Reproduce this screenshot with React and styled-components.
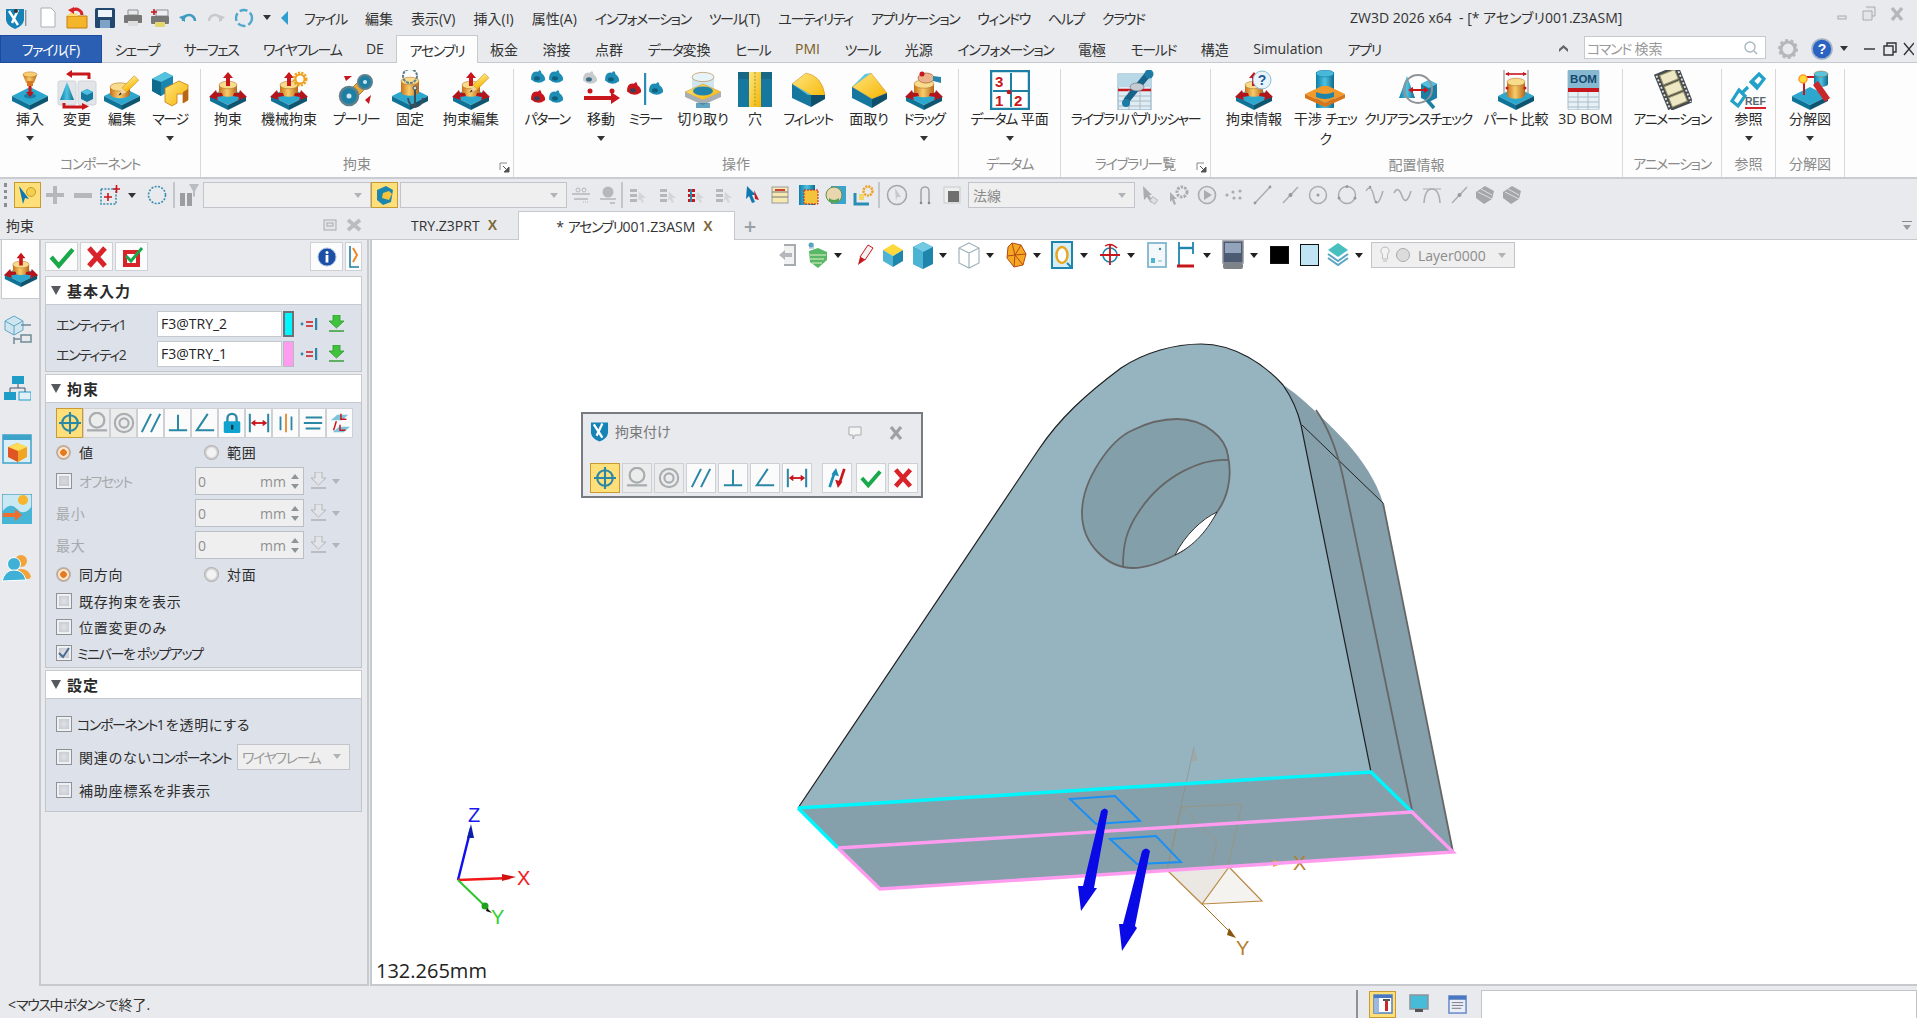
import React from "react";
import styled, { createGlobalStyle } from "styled-components";

const FONT = `"Open Sans","Noto Sans CJK JP",sans-serif`;
const Global = createGlobalStyle`
  html,body{margin:0;padding:0;background:#e8eaed;overflow:hidden;}
  *{box-sizing:border-box;}
  body{font-family:${FONT};font-feature-settings:"palt";color:#2a2a2a;}
`;

/* kana runs are set tighter than kanji, as in the original UI font */
const Kana = styled.span`letter-spacing:-1.4px;`;
const kt = (text) => text.split(/([\u30A0-\u30FF]+)/).map((part, i) => (i % 2 ? <Kana key={i}>{part}</Kana> : part));

/* ---------- icon primitives ---------- */
const I = ({ s = 40, w, h, vb = "0 0 40 40", children }) => (
  <svg width={w || s} height={h || s} viewBox={vb} style={{ display: "block", flex: "none" }}>{children}</svg>
);
const Defs = () => (
  <svg width="0" height="0" style={{ position: "absolute" }}>
    <defs>
      <linearGradient id="gold" x1="0" x2="1"><stop offset="0" stopColor="#c9701c" /><stop offset=".45" stopColor="#f7cd6a" /><stop offset="1" stopColor="#b8651a" /></linearGradient>
      <linearGradient id="teal" x1="0" x2="1"><stop offset="0" stopColor="#0f7ea6" /><stop offset=".5" stopColor="#4fc3e2" /><stop offset="1" stopColor="#0d6a8e" /></linearGradient>
      <linearGradient id="yel" x1="0" y1="0" x2="1" y2="1"><stop offset="0" stopColor="#ffe680" /><stop offset="1" stopColor="#f5b400" /></linearGradient>
    </defs>
  </svg>
);
const Blk = ({ y = 0 }) => (
  <g transform={`translate(0 ${y})`}>
    <path d="M2 26 20 17 38 26 20 35Z" fill="#2ca8cf" />
    <path d="M2 26V31L20 40V35Z" fill="#0f7297" />
    <path d="M38 26V31L20 40V35Z" fill="#0f5570" />
  </g>
);
const Cyl = ({ x = 20, y = 13, rx = 9, h = 9, fill = "url(#gold)", top = "#f8dc8c" }) => (
  <g>
    <path d={`M${x - rx} ${y}V${y + h}A${rx} ${rx * 0.42} 0 0 0 ${x + rx} ${y + h}V${y}Z`} fill={fill} />
    <ellipse cx={x} cy={y} rx={rx} ry={rx * 0.42} fill={top} stroke="#a9661c" strokeWidth=".5" />
  </g>
);
const RedUp = ({ x = 20, y = 3, l = 9 }) => <path d={`M${x} ${y}l5 6h-3v${l}h-4v-${l}h-3z`} fill="#c8161d" />;
const Arms = () => <path d="M1 27 8 20l1 3 5 0 1 3-6 1 1 3zM39 27 32 20l-1 3-5 0-1 3 6 1-1 3z" fill="#b4151b" />;
const Pencil = ({ x = 20, y = 20, s = 1 }) => (
  <g transform={`translate(${x} ${y}) rotate(45) scale(${s})`}>
    <rect x="-2.5" y="-20" width="5.5" height="15" fill="url(#yel)" stroke="#c58a14" strokeWidth=".5" />
    <path d="M-2.5-5h5.5L.2 2z" fill="#f0d2a0" />
    <path d="M-.7-1 1.1-1 .2 2z" fill="#222" />
  </g>
);
const Bolt = ({ x, y, c = "#1e8db5", r = 7 }) => (
  <g>
    <path d={`M${x - r} ${y + r * .5}Q${x - r} ${y - r * .8} ${x} ${y - r * .6}Q${x + r * .4} ${y - r * 1.1} ${x + r * .5} ${y - r * .4}Q${x + r * 1.1} ${y} ${x + r} ${y + r * .6}Q${x} ${y + r * 1.4} ${x - r} ${y + r * .5}Z`} fill={c} />
    <ellipse cx={x - r * .15} cy={y + r * .35} rx={r * .42} ry={r * .3} fill="#0b4f69" opacity=".75" />
  </g>
);
const Constraint = () => (<><Blk /><Cyl y={15} rx={9} h={8} /><RedUp y={2} l={8} /><Arms /></>);

const icons = {
  insert: <><Blk /><ellipse cx="20" cy="26" rx="6" ry="2.6" fill="#1a7ea8" /><rect x="18.5" y="13" width="3" height="10" fill="#c8161d" /><path d="M16 22h8l-4 5z" fill="#b4151b" /><path d="M13 5h14l-3 8h-8z" fill="url(#gold)" /><ellipse cx="20" cy="4.5" rx="7" ry="2.6" fill="#f8cf70" stroke="#b4621a" strokeWidth=".5" /><rect x="17" y="11" width="6" height="5" fill="#d8771f" /></>,
  change: <><rect x="1" y="11" width="18" height="24" rx="2" fill="#e2e5e8" stroke="#cfd3d8" /><rect x="21" y="11" width="18" height="24" rx="2" fill="#e2e5e8" stroke="#cfd3d8" /><path d="M10 12 3 30h14z" fill="url(#teal)" /><path d="M24 22l6-3 6 3v7l-6 3-6-3z" fill="#17789f" /><path d="M24 22l6-3 6 3-6 3z" fill="#4cbfe0" /><path d="M32 3v6M33 4H14" stroke="#c8161d" strokeWidth="3" fill="none" /><path d="M15 0v8l-6-4z" fill="#c8161d" /><path d="M7 33v4h19" stroke="#c8161d" strokeWidth="3" fill="none" /><path d="M25 33v7l7-3.5z" fill="#c8161d" /></>,
  edit: <><Blk /><Cyl x={18} y={17} rx={10} h={7} /><Pencil x={18} y={24} s={1.15} /></>,
  merge: <><path d="M2 9l13-7 8 4v13l-12 7-9-5z" fill="#1b86ad" /><path d="M2 9l13-7 8 4-12 6z" fill="#55c3e0" /><path d="M11 12v14l-9-5V9z" fill="#0f6b8e" /><path d="M15 18l14-7 9 4v15l-5 3v-9h-6v9l-5 3-7-4z" fill="url(#yel)" stroke="#c47a10" strokeWidth=".8" /><path d="M33 33V22l5-3v11z" fill="#b8651a" /></>,
  constraint: <Constraint />,
  mech: <><Constraint /><circle cx="31" cy="9" r="6" fill="none" stroke="#efa21f" strokeWidth="3" strokeDasharray="2 1.2" /><circle cx="31" cy="9" r="4.5" fill="none" stroke="#efa21f" strokeWidth="2" /></>,
  pulley: <><path d="M11 23 27 7l7 7-17 17z" fill="#e6a53a" stroke="#8f5a1a" strokeWidth=".7" /><circle cx="29" cy="12" r="7" fill="#1e7fa5" stroke="#5f7f8c" strokeWidth="2" /><circle cx="29" cy="12" r="2" fill="#cfe7f0" /><circle cx="13" cy="26" r="9" fill="#1e7fa5" stroke="#5f7f8c" strokeWidth="2.5" /><circle cx="13" cy="26" r="2.5" fill="#cfe7f0" /><path d="M8 6h8l-6 5zM29 30l6-5-2 9z" fill="#c8161d" /></>,
  fix: <><Blk /><Cyl y={11} rx={9} h={11} /><circle cx="20" cy="6" r="7" fill="none" stroke="#5f7f8c" strokeWidth="2" strokeDasharray="3 1" /><path d="M25 18v19M18 28q1 8 7 9q7-1 8-9" stroke="#3e4e57" strokeWidth="2" fill="none" /><circle cx="25" cy="18" r="2" fill="#ddd" stroke="#3e4e57" /></>,
  cedit: <><Constraint /><Pencil x={20} y={21} s={1.1} /></>,
  pattern: <><Bolt x={11} y={6} /><Bolt x={29} y={6} /><Bolt x={11} y={26} c="#c8161d" /><Bolt x={29} y={26} /></>,
  move: <><Bolt x={9} y={7} c="#c7cbce" /><Bolt x={31} y={7} /><circle cx="9" cy="21" r="2.5" fill="#c8161d" /><circle cx="31" cy="21" r="2.5" fill="#c8161d" /><rect x="3" y="26" width="28" height="4" fill="#c8161d" /><path d="M30 22l9 6-9 6z" fill="#c8161d" /></>,
  mirror: <><Bolt x={9} y={18} c="#c8161d" /><Bolt x={31} y={18} /><rect x="19" y="3" width="2.2" height="32" fill="#2a8db5" /></>,
  cut: <><Cyl x={20} y={7} rx={11} h={15} fill="#cfe6ee" top="#e6f3f7" /><path d="M2 22 20 14 38 22 20 30Z" fill="url(#yel)" stroke="#c4841a" strokeWidth=".5" /><ellipse cx="20" cy="21" rx="10" ry="4.5" fill="#2384aa" /><path d="M2 22v5L20 35V30ZM38 22v5L20 35V30Z" fill="#a8afb3" /><path d="M13 33h14v5H13z" fill="#1e7fa5" opacity=".7" /></>,
  hole: <><rect x="3" y="2" width="34" height="35" fill="#17789f" /><rect x="3" y="2" width="34" height="7" fill="#1d1d1d" opacity=".18" /><rect x="14" y="2" width="12" height="35" fill="url(#yel)" /><path d="M20 2v35" stroke="#8aa22c" strokeDasharray="2 1.5" /></>,
  fillet: <><path d="M4 14 18 3q16 3 19 22l-14 8z" fill="url(#yel)" stroke="#c4841a" strokeWidth=".5" /><path d="M4 14v14l19 9V25z" fill="#16779e" /><path d="M4 14l19 11-3 0z" fill="#5bc7e3" /><path d="M23 25V37l14-8v-4z" fill="#104f69" /></>,
  chamfer: <><path d="M3 17 22 3l16 20-15 6z" fill="url(#yel)" stroke="#c4841a" strokeWidth=".5" /><path d="M3 17 22 3l-6 1z" fill="#5bc7e3" /><path d="M3 17v11l20 10V29z" fill="#16779e" /><path d="M23 29v9l15-9v-6z" fill="#104f69" /></>,
  drag: <><Blk /><Cyl y={14} rx={10} h={9} /><Arms /><ellipse cx="22" cy="8" rx="8" ry="5" fill="#eab38c" stroke="#a35b32" strokeWidth=".7" /><path d="M29 6l8 1v6l-8-2z" fill="#2a86ad" /><circle cx="18" cy="4" r="2.5" fill="#c8161d" /></>,
  datum: <><rect x="1" y="1" width="38" height="38" fill="#fff" stroke="#1e7fa5" strokeWidth="2.5" /><path d="M21 3v34M3 21h36" stroke="#1e7fa5" strokeWidth="2" /><circle cx="19" cy="22" r="2.3" fill="#c8161d" /><text x="5" y="17" fontSize="15" fontWeight="700" fill="#c8161d" fontFamily="Liberation Sans">3</text><text x="5" y="36" fontSize="15" fontWeight="700" fill="#c8161d" fontFamily="Liberation Sans">1</text><text x="24" y="36" fontSize="15" fontWeight="700" fill="#c8161d" fontFamily="Liberation Sans">2</text></>,
  lib: <><rect x="2" y="4" width="33" height="36" fill="#dfecf3" stroke="#7fa8bd" /><rect x="2" y="4" width="33" height="13" fill="#b9d8e6" /><path d="M2 20h33" stroke="#c8161d" strokeWidth="2.5" /><path d="M2 26h33M2 31h33M2 36h33M13 20v20M24 20v20" stroke="#a9bac4" /><path d="M33 3 10 31" stroke="#17638a" strokeWidth="6.5" /><circle cx="33" cy="4" r="4.5" fill="#1c7ca6" /><circle cx="10" cy="33" r="4" fill="#1c7ca6" /><ellipse cx="21" cy="17" rx="7" ry="4" fill="#c5ccd1" stroke="#667" strokeWidth=".6" /></>,
  info: <><Constraint /><circle cx="28" cy="10" r="9" fill="#e8f4fa" stroke="#8cbcd2" /><text x="28" y="15" fontSize="14" fontWeight="700" textAnchor="middle" fill="#1f5a9a" fontFamily="Liberation Sans">?</text></>,
  interf: <><rect x="11" y="2" width="18" height="36" rx="1" fill="url(#teal)" /><ellipse cx="20" cy="3.5" rx="9" ry="3.5" fill="#47b8d9" stroke="#0d6a8e" strokeWidth=".5" /><path d="M0 24 17 16h6l17 8-20 9z" fill="#f09a2c" /><path d="M0 24v4l20 9v-4zM40 24v4l-20 9v-4z" fill="#d8751a" /><path d="M11 22q9 4 18 0v5q-9 4-18 0z" fill="#1e84aa" /></>,
  clear: <><path d="M1 28 9 6l8 22z" fill="url(#teal)" /><path d="M23 14l8-4 8 4v14l-8 4-8-4z" fill="#1b7fa5" /><path d="M23 14l8-4 8 4-8 4z" fill="#51c1de" /><path d="M12 20h16" stroke="#c8161d" strokeWidth="2" /><path d="M10 20l5-3v6zM31 20l-5-3v6z" fill="#c8161d" /><circle cx="20" cy="19" r="14" fill="none" stroke="#8e9498" strokeWidth="2" /><path d="M29 30l7 8" stroke="#207ea3" strokeWidth="3.5" /></>,
  compare: <><Blk /><Cyl y={12} rx={9} h={13} /><path d="M8 0v24M32 0v24" stroke="#8e9498" strokeWidth="1.2" /><path d="M10 4h20" stroke="#c8161d" strokeWidth="1.6" /><path d="M9 4l4-2v4zM31 4l-4-2v4z" fill="#c8161d" /><circle cx="11" cy="18" r="1.5" fill="#c8161d" /><circle cx="29" cy="18" r="1.5" fill="#c8161d" /></>,
  bom: <><rect x="2" y="0" width="31" height="40" rx="1.5" fill="#e7f0f5" stroke="#a2bccb" /><rect x="2" y="0" width="31" height="18" fill="#86b8d2" /><text x="17.5" y="13" textAnchor="middle" fontSize="11.5" fontWeight="700" fill="#14496e" fontFamily="Liberation Sans">BOM</text><rect x="2" y="18" width="31" height="4" fill="#c8161d" /><path d="M2 27h31M2 32h31M2 37h31M12 22v18M22 22v18" stroke="#a9bdc9" /></>,
  anim: <><g transform="rotate(-22 20 20)"><rect x="9" y="-1" width="26" height="40" fill="#474c50" /><path d="M11 1v37M33 1v37" stroke="#e6e6e6" strokeWidth="1.8" strokeDasharray="2 2" /><rect x="14" y="2" width="16" height="10" fill="#eee7c4" stroke="#9a9468" /><rect x="14" y="14" width="16" height="10" fill="#eee7c4" stroke="#9a9468" /><rect x="14" y="26" width="16" height="10" fill="#eee7c4" stroke="#9a9468" /></g></>,
  ref: <><path d="M30 4l5 5-7 9-6-6zM10 20l6 6-7 10-6-5zM22 10l7 7M12 24l7-7" fill="none" stroke="#22a2c9" strokeWidth="3.2" /><text x="16" y="35" fontSize="10.5" fontWeight="700" fill="#58686f" fontFamily="Liberation Sans">REF</text><path d="M16 38h21" stroke="#d8232a" strokeWidth="2" /></>,
  explode: <><Blk /><path d="M14 7v18" stroke="#c8161d" strokeWidth="2" /><path d="M14 7h10" stroke="#c8161d" strokeWidth="2" /><Cyl x={31} y={4} rx={7} h={10} fill="url(#teal)" top="#59c4e0" /><path d="M23 15l5-4 12 17-5 4z" fill="#c8272c" /><circle cx="13" cy="9" r="4" fill="#ffd83a" stroke="#ff9d2a" strokeWidth="1.5" /></>,
};

const mini = {
  center: <><circle cx="12" cy="12" r="8.5" fill="none" stroke="#2b87a6" strokeWidth="2.3" /><path d="M12 0v24M0 12h24" stroke="#2b87a6" strokeWidth="2.3" /></>,
  tan: <><circle cx="12" cy="9" r="8" fill="none" stroke="#a8adb0" strokeWidth="2.5" /><path d="M1 20h22" stroke="#a8adb0" strokeWidth="2.5" /></>,
  conc: <><circle cx="12" cy="12" r="10" fill="none" stroke="#a8adb0" strokeWidth="2.3" /><circle cx="12" cy="12" r="5" fill="none" stroke="#a8adb0" strokeWidth="2.3" /></>,
  par: <path d="M2 22 12 2M12 22 22 2" stroke="#2b87a6" strokeWidth="2.2" fill="none" />,
  perp: <path d="M12 3v17M2 20h20" stroke="#2b87a6" strokeWidth="2.2" fill="none" />,
  ang: <path d="M15 2 3 20h19" stroke="#2b87a6" strokeWidth="2.2" fill="none" />,
  lock: <><path d="M7 11V7a5 5 0 0 1 10 0v4" fill="none" stroke="#2b87a6" strokeWidth="2.5" /><rect x="3" y="10" width="18" height="13" rx="1.5" fill="#10a3cf" /><rect x="11" y="14" width="2.4" height="5" fill="#0b2f44" /></>,
  dist: <><path d="M2 2v20M22 2v20" stroke="#2b87a6" strokeWidth="2.2" /><path d="M6 12h12" stroke="#c8161d" strokeWidth="2" /><path d="M3 12l5-3.5v7zM21 12l-5-3.5v7z" fill="#c8161d" /></>,
  sym: <><path d="M6 5v15M18 5v15" stroke="#2b87a6" strokeWidth="2" fill="none" /><path d="M12 2v20" stroke="#e8892a" strokeWidth="2" /></>,
  eq: <path d="M4 6h18M2 12h20M4 18h16" stroke="#2b87a6" strokeWidth="2" fill="none" />,
  mate: <><path d="M2 9l7-6h12l-7 6z" fill="#7cc4dc" /><path d="M4 22l7-6h12l-7 6z" fill="#7cc4dc" /><path d="M8 10 5 20" stroke="#c8161d" strokeWidth="1.6" fill="none" /><path d="M13 2v6l6 0M12 14v6h6" stroke="#c8161d" strokeWidth="1.6" fill="none" /></>,
  flip: <><path d="M4 22 9 7" stroke="#1e8db5" strokeWidth="3" /><path d="M11 1l3 9-8-2z" fill="#1e8db5" /><path d="M20 2 15 17" stroke="#c8161d" strokeWidth="3" /><path d="M13 23l-3-9 8 2z" fill="#c8161d" /></>,
  ok: <path d="M2 12l7 8L22 5" stroke="#19a84a" strokeWidth="4.2" fill="none" />,
  no: <path d="M4 3l16 18M20 3 4 21" stroke="#d8232a" strokeWidth="5" fill="none" />,
};

const Check = ({ s = 26 }) => <I s={s} vb="0 0 24 24"><path d="M2 12l7 8L22 5" stroke="#19a84a" strokeWidth="4" fill="none" /></I>;
const Cross = ({ s = 24 }) => <I s={s} vb="0 0 24 24"><path d="M4 3l16 18M20 3 4 21" stroke="#d8232a" strokeWidth="5" fill="none" /></I>;
const OkPlus = () => <I s={24} vb="0 0 24 24"><rect x="3" y="5" width="17" height="17" fill="#d8232a" /><rect x="7" y="9" width="9" height="9" fill="#fff" /><path d="M6 11l5 5 11-13" stroke="#19a84a" strokeWidth="3" fill="none" /></I>;
const InfoI = () => <I s={20} vb="0 0 20 20"><circle cx="10" cy="10" r="9" fill="#1c4fa6" stroke="#a5bfe4" /><circle cx="10" cy="5.5" r="1.5" fill="#fff" /><rect x="8.6" y="8" width="2.8" height="7.5" fill="#fff" /></I>;
const Collapse = () => <I w={12} h={24} vb="0 0 12 24"><path d="M2 1v21h9" stroke="#1e7fa5" strokeWidth="1.6" fill="none" /><path d="M5 3l4 7-4 7" stroke="#e8892a" strokeWidth="2" fill="none" /></I>;
const Picker = () => <I w={18} h={14} vb="0 0 18 14"><circle cx="2" cy="7" r="1.4" fill="#2b87a6" /><path d="M6 5h7M6 9h7" stroke="#c8161d" strokeWidth="1.6" /><rect x="15" y="1" width="2.2" height="12" fill="#2b87a6" /></I>;
const Down = ({ on = true }) => (
  <I w={17} h={18} vb="0 0 17 18">
    <path d="M5 0h7v6h4l-7.5 7L1 6h4z" fill={on ? "#3fc23c" : "#e2e4e7"} stroke={on ? "#2b9a2b" : "#a9adb3"} strokeWidth=".8" />
    <path d="M1 16h15" stroke={on ? "#2b9a2b" : "#a9adb3"} strokeWidth="1.4" />
  </I>
);

/* ---------- layout ---------- */
const Page = styled.div`width:1917px;height:1018px;display:flex;flex-direction:column;overflow:hidden;background:#e8eaed;position:relative;font-size:14px;`;

const TitleBar = styled.div`height:35px;flex:none;display:flex;align-items:center;position:relative;`;
const QuickBtn = styled.div`width:${p => p.$w || 28}px;display:flex;justify-content:center;align-items:center;flex:none;`;
const MenuList = styled.div`display:flex;gap:18px;margin-left:8px;color:#333;font-size:14px;white-space:nowrap;`;
const AppTitle = styled.div`position:absolute;left:1350px;top:7px;font-size:14px;color:#333;white-space:pre;`;
const WinBtns = styled.div`position:absolute;right:0;top:6px;display:flex;gap:12px;width:82px;align-items:center;`;

const TabBar = styled.div`height:28px;flex:none;display:flex;align-items:stretch;position:relative;border-bottom:1px solid #c6c9ce;`;
const FileTab = styled.div`width:102px;margin-bottom:-1px;background:#2a5fb3;border:1px solid #1e4c9c;color:#fff;display:flex;align-items:center;justify-content:center;font-size:14px;`;
const Tab = styled.div`padding:0 12.3px;display:flex;align-items:center;white-space:nowrap;font-size:14px;color:${p => p.$color || "#333"};
  ${p => p.$active && `background:#fdfdfd;border:1px solid #c6c9ce;border-bottom:none;margin-bottom:-1px;`}`;
const SearchWrap = styled.div`position:absolute;left:1584px;top:1px;width:182px;height:23px;background:#fff;border:1px solid #c6c9ce;display:flex;align-items:center;padding:0 6px 0 2px;justify-content:space-between;color:#9a9a9a;font-size:14px;`;
const TabTools = styled.div`position:absolute;top:0;height:27px;display:flex;align-items:center;left:${p => p.$x}px;`;

const Ribbon = styled.div`height:116px;flex:none;background:#fdfdfd;border-bottom:2px solid #c9ccd1;display:flex;padding-top:6px;`;
const Group = styled.div`width:${p => p.$w}px;flex:none;border-right:1px solid #d7d9dd;display:flex;flex-direction:column;position:relative;`;
const GroupBody = styled.div`flex:1;display:flex;`;
const GroupLabel = styled.div`height:29px;flex:none;text-align:center;font-size:14px;color:#8a8a8a;line-height:31px;white-space:nowrap;`;
const Launcher = styled.div`position:absolute;right:3px;bottom:4px;`;
const RibBtn = styled.div`width:${p => p.$w}px;flex:none;display:flex;flex-direction:column;align-items:center;`;
const RibIcon = styled.div`height:42px;display:flex;align-items:center;justify-content:center;`;
const RibText = styled.div`font-size:14px;line-height:20px;margin-top:-2px;text-align:center;color:#2a2a2a;white-space:pre;`;
const Caret = styled.div`width:0;height:0;border-left:4px solid transparent;border-right:4px solid transparent;border-top:5px solid ${p => p.$c || "#333"};margin-top:${p => p.$mt ?? 7}px;flex:none;`;

const ToolBar = styled.div`height:32px;flex:none;display:flex;align-items:center;padding-left:2px;`;
const Grip = styled.div`width:10px;height:24px;border-left:3px dotted #8b8f94;margin-left:2px;flex:none;`;
const ToolBtn = styled.div`width:${p => p.$w || 28}px;height:26px;flex:none;display:flex;align-items:center;justify-content:center;
  ${p => p.$on && `background:#ffdf7a;border:1px solid #c79a33;`}`;
const ToolSep = styled.div`width:2px;height:26px;background:#c3c6ca;flex:none;`;
const Combo = styled.div`width:${p => p.$w}px;height:26px;flex:none;margin-right:${p => p.$mr || 0}px;margin-left:${p => p.$ml || 0}px;background:#efefef;border:1px solid #c1c4c9;display:flex;align-items:center;justify-content:space-between;padding:0 8px 0 4px;color:#8a8a8a;font-size:14px;`;
const GrayCaret = styled(Caret)`border-top-color:#b0b3b7;margin:0;`;

const DocRow = styled.div`height:29px;flex:none;display:flex;position:relative;border-bottom:1px solid #c6c9ce;`;
const PanelTitle = styled.div`width:370px;flex:none;display:flex;align-items:center;padding:0 8px 0 6px;justify-content:space-between;font-size:14px;color:#333;`;
const PanelTitleIcons = styled.div`display:flex;gap:9px;align-items:center;`;
const DocTabs = styled.div`display:flex;align-items:stretch;padding-left:40px;flex:1;`;
const DocTab = styled.div`width:${p => p.$w}px;margin-right:${p => p.$mr || 0}px;padding-left:${p => p.$pl || 0}px;display:flex;align-items:center;justify-content:center;gap:8px;font-size:14px;white-space:nowrap;color:#333;
  ${p => p.$active && `background:#fff;border:1px solid #c6c9ce;border-bottom:none;margin-bottom:-1px;`}`;
const TabX = styled.span`color:#7d6a3c;font-weight:700;font-size:14px;font-family:"Liberation Sans",sans-serif;`;
const PlusTab = styled.div`width:30px;display:flex;align-items:center;justify-content:center;color:#9aa0a6;font-size:22px;font-weight:600;`;
const DocMenu = styled.div`position:absolute;right:5px;top:10px;display:flex;flex-direction:column;gap:1px;align-items:center;`;
const DocMenuLine = styled.div`width:10px;height:1px;background:#888;`;

const Main = styled.div`flex:1;display:flex;min-height:0;`;
const Left = styled.div`width:370px;flex:none;display:flex;`;
const Side = styled.div`width:39px;flex:none;display:flex;flex-direction:column;`;
const SideTab = styled.div`height:${p => p.$h || 60}px;display:flex;align-items:center;justify-content:center;padding-right:5px;
  ${p => p.$active && `background:#fff;border:1px solid #c6c9ce;border-right:none;border-top:none;margin-left:1px;padding-right:0;height:59px;`}`;
const PanelBox = styled.div`width:330px;flex:none;border:solid #c6c9ce;border-width:0 2px 2px 2px;padding:2px 5px 0 4px;display:flex;flex-direction:column;`;
const PBar = styled.div`height:29px;display:flex;gap:2px;margin-bottom:5px;`;
const PBtn = styled.div`width:${p => p.$w || 33}px;height:29px;background:#fcfcfc;border:1px solid #cdd0d5;display:flex;align-items:center;justify-content:center;margin-left:${p => p.$ml || 0}px;`;
const Section = styled.section`margin-bottom:2px;`;
const SectionHead = styled.div`height:29px;background:#fff;border:1px solid #c6c9ce;display:flex;align-items:center;gap:6px;padding-left:5px;font-weight:700;font-size:15px;color:#2a2a2a;letter-spacing:1px;`;
const Tri = styled.div`width:0;height:0;border-left:5.5px solid transparent;border-right:5.5px solid transparent;border-top:9px solid #55595e;`;
const SectionBody = styled.div`background:#dde1e9;border:1px solid #c2c6cc;border-top:none;padding:${p => p.$pad || "6px 0 4px 10px"};`;
const EntRow = styled.div`display:flex;align-items:center;height:26px;& + &{margin-top:4px;}`;
const EntLabel = styled.div`width:101px;font-size:14px;color:#333;`;
const EntInput = styled.div`width:125px;height:26px;background:#fff;border:1px solid #c6c9ce;padding:0 3px;font-size:14px;line-height:24px;color:#222;`;
const Swatch = styled.div`width:11px;height:26px;margin-left:1px;background:${p => p.$c};border:${p => p.$dark ? "2px solid #6c7177" : "1px solid #b6bbc2"};`;
const EntIcon = styled.div`margin-left:${p => p.$ml}px;display:flex;`;
const TypeRow = styled.div`display:flex;height:30px;`;
const TypeBtn = styled.div`width:${p => p.$w || 27}px;height:${p => p.$h || 30}px;flex:none;display:flex;align-items:center;justify-content:center;margin-right:${p => p.$mr ?? 0}px;
  background:${p => p.$on ? "#ffdf7a" : p.$off ? "#ececec" : "#fbfbfb"};border:1px solid ${p => p.$on ? "#c79a33" : "#cdd0d5"};`;
const Row = styled.div`height:${p => p.$h || 28}px;display:flex;align-items:center;margin-top:${p => p.$mt || 0}px;margin-bottom:${p => p.$mb || 0}px;color:${p => p.$dim ? "#a6a9ad" : "#2d2d2d"};font-size:14px;letter-spacing:.8px;white-space:nowrap;`;
const RadioCell = styled.div`width:148px;display:flex;align-items:center;gap:8px;`;
const Radio = styled.div`width:15px;height:15px;border-radius:50%;flex:none;
  background:${p => p.$on ? "radial-gradient(circle,#e87a1c 0 3px,#f7e3cf 3.5px 5px,#c9a78a 6px,#b7b7b7 7.5px)" : "radial-gradient(circle,#f3f3f3 0 4px,#d7d7d7 5.5px,#a9a9a9 7.5px)"};`;
const CheckBox = styled.div`width:16px;height:16px;flex:none;border:1px solid #8f9398;background:${p => p.$dim ? "#d6d9de" : "#dfe2e7"};box-shadow:inset 0 0 0 2px #eef0f3,inset 0 0 4px 3px #c3c7cd;display:flex;align-items:center;justify-content:center;margin-right:${p => p.$mr ?? 7}px;`;
const FieldLabel = styled.div`width:${p => p.$w || 116}px;flex:none;`;
const Spin = styled.div`width:109px;height:28px;background:#efefef;border:1px solid #babec5;display:flex;align-items:center;padding:0 4px 0 2px;color:#8f8f8f;font-size:14px;letter-spacing:0;flex:none;`;
const SpinVal = styled.div`flex:1;`;
const SpinArrows = styled.div`display:flex;flex-direction:column;gap:5px;margin-left:5px;`;
const Up = styled.div`width:0;height:0;border-left:4.5px solid transparent;border-right:4.5px solid transparent;border-bottom:5px solid #8d9598;`;
const Dn = styled(Up)`border-bottom:none;border-top:5px solid #8d9598;`;
const RowEnd = styled.div`margin-left:6px;display:flex;align-items:center;gap:5px;`;
const SmallCombo = styled(Combo)`width:113px;color:#9a9a9a;letter-spacing:0;`;

const View = styled.div`flex:1;position:relative;background:#fff;border-left:2px solid #c6c9ce;border-bottom:2px solid #c6c9ce;overflow:hidden;`;
const ViewBar = styled.div`position:relative;z-index:2;height:30px;display:flex;align-items:center;padding-left:403px;`;
const ViewItem = styled.div`width:${p => p.$w || 24}px;height:26px;flex:none;display:flex;align-items:center;justify-content:center;margin-left:${p => p.$ml ?? 4}px;`;
const ColorChip = styled.div`width:${p => p.$w || 19}px;height:${p => p.$h || 18}px;background:${p => p.$c};border:1px solid #111;`;
const LayerBox = styled.div`width:144px;height:26px;margin-left:7px;background:#efefef;border:1px solid #c1c4c9;display:flex;align-items:center;padding:0 8px;gap:5px;color:#8c8c8c;font-size:14px;`;
const LayerName = styled.div`flex:1;margin-left:2px;`;
const ModelSvg = styled.svg`position:absolute;left:-2px;top:0;width:1545px;height:744px;`;
const Distance = styled.div`position:absolute;left:4px;bottom:-2px;font-size:20px;line-height:30px;color:#222;`;
const MiniBar = styled.div`position:absolute;left:209px;top:172px;width:342px;height:86px;background:#e8eaed;border:2px solid #787b7f;z-index:3;display:flex;flex-direction:column;padding:0 0 0 7px;`;
const MiniHead = styled.div`height:49px;padding-bottom:16px;display:flex;align-items:center;gap:6px;color:#777;font-size:14px;`;
const MiniTitle = styled.div`flex:1;`;
const MiniTools = styled.div`display:flex;gap:27px;padding-right:18px;align-items:center;margin-top:4px;`;
const MiniRow = styled.div`display:flex;gap:2px;`;

const Status = styled.div`height:32px;flex:none;display:flex;align-items:center;padding-left:8px;font-size:14px;color:#333;`;
const StatusText = styled.div`flex:1;padding-top:4px;`;
const StatusSep = styled.div`width:2px;height:28px;background:#8e9195;margin-top:4px;flex:none;`;
const StatusBtn = styled.div`width:${p => p.$w}px;height:27px;margin-left:${p => p.$ml || 0}px;display:flex;align-items:center;justify-content:center;flex:none;margin-top:4px;
  ${p => p.$on && `background:#ffdf7a;border:1px solid #c79a33;`}`;
const StatusInput = styled.div`width:436px;height:28px;margin-left:14px;margin-top:4px;background:#fff;border:1px solid #c1c4c9;border-bottom:none;flex:none;`;

/* ---------- data ---------- */
const quick = [
  [20, <I w={20} h={22} vb="0 0 20 22"><path d="M1 2h18v11q-1 6-9 9q-8-3-9-9z" fill="#1583b5" /><path d="M4 4l9 14M13 3 7 16" stroke="#fff" strokeWidth="2.4" /><circle cx="11" cy="4" r="2" fill="#333" /></I>],
  [2, <I w={2} h={16} vb="0 0 2 16"><rect width="1.4" height="16" fill="#8f9398" /></I>],
  [7, null],
  [28, <I w={16} h={21} vb="0 0 16 21"><path d="M1 1h10l4 4v15H1z" fill="#fff" stroke="#a9adb3" /></I>],
  [30, <I w={22} h={22} vb="0 0 22 22"><path d="M1 9h20v12H1z" fill="#f4b52a" stroke="#c47f12" /><path d="M1 9l3-3h6l2 3" fill="#ffd972" /><path d="M16 8a6 6 0 0 0-9-5" stroke="#d8232a" strokeWidth="3" fill="none" /><path d="M2 3l6-3v7z" fill="#d8232a" /></I>],
  [25, <I w={20} h={20} vb="0 0 20 20"><rect x="0" y="0" width="20" height="20" rx="1.5" fill="#23486f" /><rect x="3" y="2" width="14" height="7" fill="#eef3f7" /><rect x="5" y="12" width="10" height="8" fill="#7fa3c6" /></I>],
  [31, <I w={20} h={18} vb="0 0 20 18"><path d="M5 1h10v5H5z" fill="#e7e7e7" stroke="#8b8f94" /><rect x="1" y="6" width="18" height="8" rx="1" fill="#777" /><rect x="5" y="12" width="10" height="5" fill="#ddd" /></I>],
  [24, <I w={20} h={20} vb="0 0 20 20"><path d="M6 2h12v6H6z" fill="#eee" stroke="#8b8f94" /><rect x="1" y="8" width="18" height="8" rx="1" fill="#777" /><rect x="5" y="14" width="10" height="5" fill="#e3d66f" /><path d="M1 4h6M4 1v6" stroke="#c8161d" strokeWidth="1.6" /></I>],
  [32, <I w={18} h={12} vb="0 0 18 12"><path d="M4 9a6 6 0 0 1 12 0" stroke="#3f9bc0" strokeWidth="2.5" fill="none" /><path d="M0 5l6-2 0 7z" fill="#3f9bc0" /></I>],
  [24, <I w={18} h={12} vb="0 0 18 12"><path d="M14 9a6 6 0 0 0-12 0" stroke="#c7cacd" strokeWidth="2.5" fill="none" /><path d="M18 5l-6-2 0 7z" fill="#c7cacd" /></I>],
  [32, <I w={20} h={20} vb="0 0 20 20"><circle cx="10" cy="10" r="8" fill="none" stroke="#4fa7cd" strokeWidth="2.4" strokeDasharray="8 3" /></I>],
  [14, <Caret $mt={0} />],
  [22, <I w={8} h={14} vb="0 0 8 14"><path d="M7 0v14L0 7z" fill="#2e9fd0" /></I>],
];
const menu = ["ファイル", "編集", "表示(V)", "挿入(I)", "属性(A)", "インフォメーション", "ツール(T)", "ユーティリティ", "アプリケーション", "ウィンドウ", "ヘルプ", "クラウド"];
const tabs = ["シェープ", "サーフェス", "ワイヤフレーム", "DE", "アセンブリ", "板金", "溶接", "点群", "データ変換", "ヒール", "PMI", "ツール", "光源", "インフォメーション", "電極", "モールド", "構造", "Simulation", "アプリ"];
const groups = [
  { w: 201, label: "コンポーネント", items: [["挿入", "insert", 60, 1], ["変更", "change", 34], ["編集", "edit", 56], ["マージ", "merge", 40, 1]] },
  { w: 313, label: "拘束", launcher: 1, items: [["拘束", "constraint", 54], ["機械拘束", "mech", 68], ["プーリー", "pulley", 66], ["固定", "fix", 42], ["拘束編集", "cedit", 80]] },
  { w: 445, label: "操作", items: [["パターン", "pattern", 66], ["移動", "move", 42, 1], ["ミラー", "mirror", 46], ["切り取り", "cut", 70], ["穴", "hole", 34], ["フィレット", "fillet", 72], ["面取り", "chamfer", 50], ["ドラッグ", "drag", 60, 1]] },
  { w: 102, label: "データム", items: [["データム 平面", "datum", 101, 1]] },
  { w: 150, label: "ライブラリ一覧", launcher: 1, items: [["ライブラリパブリッシャー", "lib", 149]] },
  { w: 412, label: "配置情報", items: [["拘束情報", "info", 86], ["干渉 チェッ\nク", "interf", 56], ["クリアランスチェック", "clear", 130], ["パート 比較", "compare", 66], ["3D BOM", "bom", 73]] },
  { w: 99, label: "アニメーション", items: [["アニメーション", "anim", 98]] },
  { w: 54, label: "参照", items: [["参照", "ref", 53, 1]] },
  { w: 69, label: "分解図", items: [["分解図", "explode", 68, 1]] },
];

const G = "#b4b7bb";
const gi = {
  plus: <I s={20} vb="0 0 20 20"><path d="M8 1h4v7h7v4h-7v7H8v-7H1V8h7z" fill={G} /></I>,
  minus: <I s={20} vb="0 0 20 20"><rect x="1" y="8" width="18" height="5" fill={G} /></I>,
  sel: <I s={22} vb="0 0 22 22"><rect x="2" y="5" width="15" height="15" fill="none" stroke="#3c8fb0" strokeWidth="1.6" strokeDasharray="2 1.4" /><path d="M5 13h8M9 9v8M14 5h7M17.5 1v8" stroke="#c8161d" strokeWidth="1.6" /></I>,
  car: <Caret $mt={0} />,
  dots: <I s={22} vb="0 0 22 22"><circle cx="11" cy="11" r="8.5" fill="none" stroke="#3c8fb0" strokeWidth="1.6" strokeDasharray="2 1.4" /></I>,
  filter: <I s={24} vb="0 0 24 24"><rect x="3" y="10" width="5" height="13" fill="#9a9ea3" /><rect x="10" y="10" width="5" height="13" fill="#9a9ea3" /><path d="M12 1h10l-4 7v6l-2-1V8z" fill="#b9bcc0" /></I>,
  chain: <I s={20} vb="0 0 20 20"><path d="M1 9h18M3 14h14" stroke={G} strokeWidth="1.5" /><circle cx="7" cy="5" r="2" fill="none" stroke={G} /><circle cx="13" cy="5" r="2" fill="none" stroke={G} /><path d="M12 17h5" stroke={G} strokeDasharray="1 1" /></I>,
  clock: <I s={20} vb="0 0 20 20"><circle cx="10" cy="7" r="5.5" fill={G} /><path d="M2 14h16M12 18h5" stroke={G} strokeWidth="1.6" /></I>,
  stack: <I s={20} vb="0 0 20 20"><path d="M2 4h7v3H2zM2 9h7v3H2zM2 14h7v3H2z" fill={G} /><path d="M11 7l7 6h-4l2 4-2 1-2-4-2 2z" fill="#d3d5d8" /></I>,
  stackR: <I s={20} vb="0 0 20 20"><path d="M2 4h7v3H2zM2 9h7v3H2zM2 14h7v3H2z" fill="#c8161d" /><path d="M5 4v13" stroke="#2b87a6" strokeWidth="2" /><path d="M11 7l7 6h-4l2 4-2 1-2-4-2 2z" fill="#d3d5d8" /></I>,
  cursor: <I s={20} vb="0 0 20 20"><path d="M5 1l9 9h-4l3 7-3 1-3-7-3 3z" fill="#0e79b0" /><path d="M12 5l5 10-4-1z" fill="#c8161d" /></I>,
  list: <I s={20} vb="0 0 20 20"><rect x="2" y="2" width="16" height="16" fill="#f5e8b0" stroke="#9a9a9a" /><path d="M2 7h16M2 12h16" stroke="#777" /><path d="M5 5h10" stroke="#c8161d" strokeWidth="1.6" /></I>,
  doc: <I s={22} vb="0 0 22 22"><rect x="2" y="1" width="16" height="20" fill="url(#teal)" /><rect x="7" y="6" width="14" height="14" fill="#f4c33c" stroke="#c8161d" strokeDasharray="2 1" /></I>,
  face: <I s={22} vb="0 0 22 22"><rect x="6" y="2" width="15" height="18" fill="#3aa5cc" /><circle cx="9" cy="11" r="8" fill="#e7d6ae" stroke="#6e8c4a" /><path d="M4 14q5 4 10 0v3q-5 3-10 0z" fill="#4aa558" /></I>,
  gear: <I s={22} vb="0 0 22 22"><circle cx="15" cy="7" r="4.5" fill="none" stroke="#f0a11f" strokeWidth="2.5" strokeDasharray="2 1" /><path d="M2 9v11h14" stroke="#2a8db5" strokeWidth="3" fill="none" /><rect x="6" y="10" width="5" height="6" fill="#f2d76a" /></I>,
  compass: <I s={24} vb="0 0 24 24"><circle cx="12" cy="12" r="9.5" fill="none" stroke="#a3a7ab" strokeWidth="1.6" /><path d="M10 5l6 9h-4l-1 4z" fill="#c6c8cb" /></I>,
  hook: <I s={20} vb="0 0 20 20"><path d="M6 18V6a4 4 0 0 1 8 0v12" fill="none" stroke="#a3a7ab" strokeWidth="1.6" /><circle cx="6" cy="18" r="1.3" fill="#888" /><circle cx="14" cy="18" r="1.3" fill="#888" /></I>,
  square: <I s={20} vb="0 0 20 20"><rect x="2" y="2" width="16" height="16" fill="#eee" stroke="#c9c9c9" /><rect x="6" y="6" width="11" height="11" fill="#6f6f6f" /></I>,
  pick: <I s={20} vb="0 0 20 20"><path d="M3 1l9 9-3 0 4 6-2 2-4-6-3 3z" fill="#a9acb0" /><rect x="11" y="13" width="6" height="5" fill="#e0e0e0" stroke="#bbb" transform="rotate(35 14 15)" /></I>,
  pgear: <I s={22} vb="0 0 22 22"><circle cx="14" cy="8" r="5" fill="none" stroke="#a9acb0" strokeWidth="3" strokeDasharray="2.4 1.2" /><path d="M2 8l7 7-3 0 2 5-2 1-2-5-2 2z" fill="#a9acb0" /></I>,
  play: <I s={20} vb="0 0 20 20"><circle cx="10" cy="10" r="8.5" fill="#e6e7e9" stroke="#a9acb0" strokeWidth="1.6" /><path d="M7 5l8 5-8 5z" fill="#a9acb0" /></I>,
  pts: <I s={20} vb="0 0 20 20"><g fill="#a9acb0"><circle cx="3" cy="10" r="1.6" /><circle cx="9" cy="7" r="1.6" /><circle cx="16" cy="6" r="1.6" /><circle cx="10" cy="13" r="1.6" /><circle cx="16" cy="13" r="1.6" /></g></I>,
  line: <I s={20} vb="0 0 20 20"><path d="M3 18 18 2" stroke="#a9acb0" strokeWidth="1.4" /><circle cx="3" cy="18" r="1.4" fill="#999" /><circle cx="18" cy="2" r="1.4" fill="#999" /></I>,
  lineM: <I s={20} vb="0 0 20 20"><path d="M3 18 18 2" stroke="#a9acb0" strokeWidth="1.4" /><circle cx="10.5" cy="10" r="2" fill="#999" /></I>,
  circ: <I s={20} vb="0 0 20 20"><circle cx="10" cy="10" r="8.5" fill="none" stroke="#a9acb0" strokeWidth="1.5" /><circle cx="10" cy="10" r="1.5" fill="#999" /></I>,
  circ3: <I s={20} vb="0 0 20 20"><circle cx="10" cy="10" r="8.5" fill="none" stroke="#a9acb0" strokeWidth="1.5" /><circle cx="10" cy="1.5" r="1.5" fill="#999" /><circle cx="2" cy="13" r="1.5" fill="#999" /><circle cx="18" cy="13" r="1.5" fill="#999" /></I>,
  spl: <I s={20} vb="0 0 20 20"><path d="M1 6q5-8 8 6t9-6" fill="none" stroke="#a9acb0" strokeWidth="1.4" /><circle cx="5" cy="2" r="1.3" fill="#999" /><circle cx="11" cy="17" r="1.3" fill="#999" /></I>,
  wave: <I s={20} vb="0 0 20 20"><path d="M1 8q4-8 8 3t9-5" fill="none" stroke="#a9acb0" strokeWidth="1.5" /></I>,
  arc: <I s={20} vb="0 0 20 20"><path d="M2 18Q3 4 10 4t8 14" fill="none" stroke="#a9acb0" strokeWidth="1.5" /><path d="M1 4h18" stroke="#a9acb0" /></I>,
  blob: <I s={22} vb="0 0 22 22"><path d="M2 8l9-6 9 5-2 8-8 5-8-6z" fill="#a3a7aa" /><path d="M4 8l14 7M7 5l11 6" stroke="#dedede" /></I>,
};
const toolA = [["plus", 28], ["minus", 28], ["sel", 26], ["car", 18], ["dots", 32]];
const toolB = [["chain", 28], ["clock", 26]];
const toolC = [["stack", 30], ["stack", 29], ["stackR", 28], ["stack", 28], ["cursor", 28], ["list", 28], ["doc", 28], ["face", 28], ["gear", 28]];
const toolD = [["compass", 33], ["hook", 23], ["square", 32]];
const toolE = [["pick", 28], ["pgear", 30], ["play", 26], ["pts", 28], ["line", 28], ["lineM", 27], ["circ", 29], ["circ3", 29], ["spl", 28], ["wave", 28], ["arc", 29], ["lineM", 26], ["blob", 26], ["blob", 28]];

const vi = {
  exit: <I w={20} h={24} vb="0 0 20 24"><path d="M7 2h11v20H7" fill="#f2f2f2" stroke="#a8abaf" strokeWidth="2" /><path d="M2 12l6-5v3h7v4H8v3z" fill="#b4b7bb" /></I>,
  tree: <I w={22} h={28} vb="0 0 22 28"><path d="M3 2h5v6H3z" fill="#c9d7df" /><circle cx="5" cy="4" r="2.5" fill="#5aa3c4" /><path d="M3 10l9-3 9 4v8l-9 8-8-6z" fill="#58b868" /><path d="M4 14h16M4 18h14M6 22h10" stroke="#e9f2c8" /></I>,
  brush: <I w={18} h={22} vb="0 0 18 22"><path d="M12 1l5 3-8 12-5-3z" fill="#f3f3f3" stroke="#c8161d" /><path d="M4 13l5 3-7 5z" fill="#c8161d" /></I>,
  box: <I w={22} h={24} vb="0 0 22 24"><path d="M11 1l10 6-10 6L1 7z" fill="#ffd83a" /><path d="M1 7v11l10 6V13z" fill="#4fb3d3" /><path d="M21 7v11l-10 6V13z" fill="#1c86ad" /></I>,
  cube: <I w={22} h={28} vb="0 0 22 28"><path d="M11 1l10 5v17l-10 5-10-5V6z" fill="#1e86ad" /><path d="M1 6l10-5 10 5-10 5z" fill="#73cbe3" /><path d="M11 11v17l-10-5V6z" fill="#4cb4d3" /></I>,
  wire: <I w={22} h={28} vb="0 0 22 28"><path d="M11 2l10 5v15l-10 5-10-5V7zM1 7l10 5 10-5M11 12v15" fill="#fff" stroke="#9fb3bd" strokeWidth="1.2" /></I>,
  mesh: <I w={22} h={28} vb="0 0 22 28"><path d="M7 2l9 2 5 9-3 11-9 2-7-9 1-11z" fill="#f7a823" stroke="#b24a14" /><path d="M7 2l3 12 11-1M10 14l-8 1M10 14l-1 12M16 4l-6 10M10 14l8 10" stroke="#b24a14" fill="none" /></I>,
  zoom: <I w={24} h={28} vb="0 0 24 28"><rect x="1" y="1" width="20" height="26" fill="#d7eef6" stroke="#1e86ad" strokeWidth="2" /><ellipse cx="11" cy="14" rx="5.5" ry="8" fill="#fff" stroke="#e6a725" strokeWidth="2.5" /><path d="M16 22l5 5" stroke="#1e86ad" strokeWidth="2" /></I>,
  target: <I w={22} h={26} vb="0 0 22 26"><circle cx="11" cy="13" r="7" fill="none" stroke="#1e86ad" strokeWidth="1.6" /><path d="M11 3v20M1 13h20" stroke="#c8161d" strokeWidth="1.8" /><path d="M6 4Q12 0 18 6" stroke="#c8161d" fill="none" strokeWidth="1.5" /></I>,
  page: <I w={20} h={28} vb="0 0 20 28"><rect x="1" y="2" width="18" height="24" fill="#f4f7f9" stroke="#7fb6cf" strokeWidth="1.8" /><rect x="4" y="17" width="4" height="5" fill="#4fb3d3" /><circle cx="13" cy="8" r="1.2" fill="#3a8db0" /><path d="M11 20h4" stroke="#7fb6cf" /></I>,
  dim: <I w={20} h={30} vb="0 0 20 30"><path d="M3 2v24M17 2v12" stroke="#1e86ad" strokeWidth="1.8" /><path d="M3 8h14" stroke="#1e86ad" strokeWidth="2.4" /><path d="M1 26h17" stroke="#c8161d" strokeWidth="3" /></I>,
  screen: <I w={22} h={30} vb="0 0 22 30"><rect x="1" y="1" width="20" height="22" fill="#4d5a73" stroke="#8e949b" strokeWidth="1.5" /><rect x="3" y="3" width="16" height="10" fill="#93a3bb" /><rect x="1" y="23" width="20" height="6" rx="2" fill="#7e8388" /></I>,
  layers: <I w={24} h={28} vb="0 0 24 28"><path d="M12 2l10 7-10 7L2 9z" fill="#49bfc0" /><path d="M2 13l10 7 10-7M2 17l10 7 10-7" fill="none" stroke="#5aa4c4" strokeWidth="2" /></I>,
};

const ArrowTri = () => <Caret $mt={0} $c="#222" />;

const Model = () => (
  <ModelSvg viewBox="370 240 1545 744">
    <path d="M1283 385C1300 395 1330 425 1347 443C1362 460 1376 480 1383 503L1453 852L1412 812L1371 772Z" fill="#85a0ab" />
    <path d="M798 808L1039 449C1060 418 1085 395 1121 368C1145 352 1175 344 1201 344C1235 344 1265 365 1283 385C1292 398 1298 412 1301 425L1371 772Z" fill="#96b4c0" />
    <path d="M798 808 1371 772 1412 812 1453 852 880 889Z" fill="#85a0ab" />
    <path d="M1177 419C1205 419 1226 438 1228 456C1233 480 1226 500 1217 512C1205 530 1190 548 1175 555C1160 563 1145 568 1133 568C1108 568 1082 545 1082 513C1082 480 1110 440 1133 430C1147 423 1162 419 1177 419Z" fill="#83a0aa" stroke="#666" strokeWidth="1.8" />
    <path d="M1228 460C1205 458 1165 473 1140 510C1126 530 1123 545 1123 566" fill="none" stroke="#666" strokeWidth="1.8" />
    <path d="M1217 512C1202 519 1185 535 1175 555C1190 548 1205 535 1217 512Z" fill="#fff" stroke="#333" strokeWidth="1" />
    <path d="M798 808 1039 449C1060 418 1085 395 1121 368C1145 352 1175 344 1201 344C1235 344 1265 365 1283 385C1292 398 1298 412 1301 425L1371 772" fill="none" stroke="#1f1f1f" strokeWidth="1.2" />
    <path d="M1302 425 1383 503" fill="none" stroke="#222" strokeWidth="1" />
    <path d="M1316 410C1330 430 1338 455 1343 477L1412 810" fill="none" stroke="#666" strokeWidth="1.8" />
    <path d="M1383 503 1453 852" fill="none" stroke="#666" strokeWidth="1.8" />
    <path d="M1167 870 1194 747" stroke="#8f8a7c" strokeWidth="1" opacity=".55" />
    <path d="M1194 747l-4 14h8z" fill="#9fa39f" opacity=".7" />
    <path d="M1182 807 1242 804 1228 867 1167 870ZM1182 807 1217 842 1202 904" fill="none" stroke="#a98a5c" strokeWidth="1" opacity=".5" />
    <path d="M1229 867 1262 901 1202 904Z" fill="#f5f3f0" />
    <path d="M1167 870 1229 867 1202 904Z" fill="#ebe8e4" />
    <path d="M1167 870 1202 904 1229 867M1202 904 1262 901 1229 867" fill="none" stroke="#b98a44" strokeWidth="1.2" />
    <path d="M1202 904 1232 934" stroke="#a86f1c" strokeWidth="1" />
    <path d="M1229 928l7 10-9-3z" fill="#8a5510" />
    <text x="1236" y="955" fontSize="20" fill="#b57f2e" fontFamily="Liberation Sans">Y</text>
    <path d="M1273 860l11 3-11 4z" fill="#e8a040" />
    <text x="1293" y="870" fontSize="20" fill="#b57f2e" fontFamily="Liberation Sans">X</text>
    <g fill="none" strokeWidth="3.4">
      <path d="M798 808 1371 772 1412 812" stroke="#00f6ff" />
      <path d="M798 808 838 848" stroke="#00f6ff" />
      <path d="M838 848 1412 812 1453 852 880 889 838 848" stroke="#ff9cf0" />
    </g>
    <path d="M1070 799 1115 796 1140 821 1096 824ZM1110 839 1156 836 1181 862 1137 864Z" fill="none" stroke="#1a90f5" strokeWidth="2" />
    <path d="M1101 811Q1105 806 1108 811L1094 888 1097 888 1081 911 1078 886 1083 886Z" fill="#0a0ae6" />
    <path d="M1142 851Q1146 846 1150 851L1135 926 1137 928 1122 951 1119 924 1123 924Z" fill="#0a0ae6" />
    <path d="M458 880 471 828" stroke="#1010ee" strokeWidth="2.4" />
    <path d="M471 824l3 14h-7z" fill="#0d1fa8" />
    <text x="468" y="822" fontSize="20" fill="#1a1af0" fontFamily="Liberation Sans">Z</text>
    <path d="M458 880 510 878" stroke="#f01818" strokeWidth="2.4" />
    <path d="M516 877l-14 4v-7z" fill="#d01212" />
    <text x="517" y="885" fontSize="20" fill="#f02020" fontFamily="Liberation Sans">X</text>
    <path d="M458 880 488 909" stroke="#2cc62c" strokeWidth="2" />
    <circle cx="485" cy="906" r="3.5" fill="#1fa11f" /><path d="M487 908l5 5-6-2z" fill="#111" />
    <text x="491" y="924" fontSize="20" fill="#2fd02f" fontFamily="Liberation Sans">Y</text>
  </ModelSvg>
);

export default function App() {
  return (
    <Page>
      <Global /><Defs />
      <TitleBar>
        <QuickBtn $w={5} />
        {quick.map(([w, ic], i) => <QuickBtn key={i} $w={w}>{ic}</QuickBtn>)}
        <MenuList>{menu.map(m => <span key={m}>{kt(m)}</span>)}</MenuList>
        <AppTitle>{"ZW3D 2026 x64  - [* アセンブリ001.Z3ASM]"}</AppTitle>
        <WinBtns>
          <I s={14} vb="0 0 14 14"><rect x="3" y="9" width="8" height="3" fill="#e4e5e7" stroke="#a8abaf" /></I>
          <I s={16} vb="0 0 16 16"><path d="M5 1h9v9h-3M2 5h9v9H2z" fill="#e4e5e7" stroke="#a8abaf" /></I>
          <I s={16} vb="0 0 16 16"><path d="M3 2l10 12M13 2 3 14" stroke="#b4b7bb" strokeWidth="3.4" /></I>
        </WinBtns>
      </TitleBar>

      <TabBar>
        <FileTab>{kt("ファイル(F)")}</FileTab>
        {tabs.map(t => <Tab key={t} $active={t === "アセンブリ"} $color={t === "PMI" ? "#7a5a20" : undefined}>{kt(t)}</Tab>)}
        <TabTools $x={1557}><I s={13} vb="0 0 13 13"><path d="M2 7l4.5-4L11 7v3L6.5 6 2 10z" fill="#666" /></I></TabTools>
        <SearchWrap><span>{kt("コマンド 検索")}</span><I s={16} vb="0 0 16 16"><circle cx="7" cy="7" r="5" fill="none" stroke="#a8b8c0" strokeWidth="1.4" /><path d="M11 11l3 3" stroke="#a8b8c0" strokeWidth="1.6" /></I></SearchWrap>
        <TabTools $x={1777}><I s={22} vb="0 0 22 22"><circle cx="11" cy="11" r="7" fill="none" stroke="#b4b7bb" strokeWidth="3.2" /><circle cx="11" cy="11" r="9" fill="none" stroke="#b4b7bb" strokeWidth="2" strokeDasharray="3 2.6" /></I></TabTools>
        <TabTools $x={1811}><I s={22} vb="0 0 22 22"><circle cx="11" cy="11" r="10" fill="#2b63c3" stroke="#a5b4c8" strokeWidth="1.6" /><text x="11" y="16" fontSize="14" fontWeight="700" textAnchor="middle" fill="#fff" fontFamily="Liberation Sans">?</text></I></TabTools>
        <TabTools $x={1840}><Caret $mt={0} /></TabTools>
        <TabTools $x={1864}><I s={50} h={14} vb="0 0 50 14"><path d="M0 7h11" stroke="#444" strokeWidth="1.6" /><path d="M20 4h9v9h-9zM23 4V1h9v9h-3" fill="none" stroke="#333" strokeWidth="1.4" /><path d="M40 1l10 12M50 1 40 13" stroke="#333" strokeWidth="1.4" /></I></TabTools>
      </TabBar>

      <Ribbon>
        {groups.map(g => (
          <Group key={g.label} $w={g.w}>
            <GroupBody>
              {g.items.map(([t, ic, w, car]) => (
                <RibBtn key={t} $w={w}>
                  <RibIcon><I s={40}>{icons[ic]}</I></RibIcon>
                  <RibText>{kt(t)}</RibText>
                  {car ? <Caret /> : null}
                </RibBtn>
              ))}
            </GroupBody>
            <GroupLabel>{kt(g.label)}</GroupLabel>
            {g.launcher ? <Launcher><I s={11} vb="0 0 11 11"><path d="M1 1h7M1 1v7" stroke="#888" /><path d="M4 4l6 6M10 5v5H5z" fill="#555" stroke="#555" /></I></Launcher> : null}
          </Group>
        ))}
      </Ribbon>

      <ToolBar>
        <Grip />
        <ToolBtn $on $w={27}><I s={22} vb="0 0 22 22"><path d="M2 2l10 13-4-1-2 6z" fill="#0e79b0" /><circle cx="14" cy="8" r="4.5" fill="#f5d04e" stroke="#c79a33" /></I></ToolBtn>
        {toolA.map(([k, w], i) => <ToolBtn key={i} $w={w}>{gi[k]}</ToolBtn>)}
        <ToolSep />
        <ToolBtn $w={28}>{gi.filter}</ToolBtn>
        <Combo $w={168}><span /><GrayCaret /></Combo>
        <ToolBtn $on $w={27}><I s={22} vb="0 0 22 22"><path d="M3 6l9-4 7 4-2 12-8 3-6-5z" fill="#1c86ad" /><path d="M9 9l6-2 3 3-3 6-7-2z" fill="#f5c43a" /></I></ToolBtn>
        <Combo $w={167} $ml={2}><span /><GrayCaret /></Combo>
        {toolB.map(([k, w], i) => <ToolBtn key={i} $w={w}>{gi[k]}</ToolBtn>)}
        <ToolSep />
        {toolC.map(([k, w], i) => <ToolBtn key={i} $w={w}>{gi[k]}</ToolBtn>)}
        <ToolSep />
        {toolD.map(([k, w], i) => <ToolBtn key={i} $w={w}>{gi[k]}</ToolBtn>)}
        <Combo $w={167} $mr={1}>法線<GrayCaret /></Combo>
        {toolE.map(([k, w], i) => <ToolBtn key={i} $w={w}>{gi[k]}</ToolBtn>)}
      </ToolBar>

      <DocRow>
        <PanelTitle>拘束
          <PanelTitleIcons>
            <I w={14} h={12} vb="0 0 14 12"><rect x="1" y="1" width="12" height="10" fill="#e4e5e7" stroke="#a8abaf" /><rect x="4" y="4" width="6" height="3" fill="none" stroke="#a8abaf" /></I>
            <I w={16} h={14} vb="0 0 16 14"><path d="M2 2l12 10M14 2 2 12" stroke="#b9bcc0" strokeWidth="3.6" /></I>
          </PanelTitleIcons>
        </PanelTitle>
        <DocTabs>
          <DocTab $w={88} $mr={20}>TRY.Z3PRT <TabX>X</TabX></DocTab>
          <DocTab $w={217} $pl={16} $active><span>{kt("* アセンブリ001.Z3ASM")}</span> <TabX>X</TabX></DocTab>
          <PlusTab>+</PlusTab>
        </DocTabs>
        <DocMenu><DocMenuLine /><Caret $mt={2} $c="#999" /></DocMenu>
      </DocRow>

      <Main>
        <Left>
          <Side>
            <SideTab $active><I s={36}><Constraint /></I></SideTab>
            <SideTab><I s={30} vb="0 0 30 30"><path d="M3 7l9-5 9 5v9l-9 5-9-5z" fill="#cfe5ef" stroke="#5fa6c4" /><path d="M3 7l9 5 9-5M12 12v9" stroke="#5fa6c4" fill="none" /><path d="M19 11h10M12 23v7M12 25h6M19 21h10v7H19z" stroke="#6f8b98" strokeWidth="1.5" fill="none" /></I></SideTab>
            <SideTab><I s={28} vb="0 0 28 28"><rect x="9" y="1" width="12" height="8" fill="#1e9dc7" /><rect x="1" y="17" width="12" height="8" fill="#1e9dc7" /><rect x="16" y="17" width="12" height="8" fill="#dff0f7" stroke="#1e9dc7" /><path d="M15 9v4M7 17v-4h15v4" stroke="#456" fill="none" /></I></SideTab>
            <SideTab><I s={30} vb="0 0 30 30"><rect x="1" y="1" width="28" height="28" fill="#d9eef7" stroke="#3ea3c9" strokeWidth="1.5" /><rect x="1" y="1" width="28" height="5" fill="#3ea3c9" /><path d="M15 9l10 4v10l-9 5-10-5V13z" fill="#f0a623" /><path d="M6 13l10-4 9 4-9 4z" fill="#ffdc58" /><path d="M6 13v10l10 5V17z" fill="#dc3a24" opacity=".75" /></I></SideTab>
            <SideTab><I s={30} vb="0 0 30 30"><rect x="0" y="0" width="30" height="30" fill="#c8e9f4" stroke="#2b87a6" /><circle cx="21" cy="6" r="5" fill="#f7b52d" /><path d="M0 18q8-11 15-3t15-3v18H0z" fill="#46b5d6" /><path d="M1 19h12v-4l7 6-7 6v-4H1z" fill="#ef6e2e" /></I></SideTab>
            <SideTab><I s={30} vb="0 0 30 30"><circle cx="19" cy="7" r="6" fill="#f2a33a" /><path d="M9 24q2-9 10-9t10 8l-2 2z" fill="#f2a33a" /><circle cx="12" cy="10" r="6.5" fill="#3fb0d6" stroke="#fff" /><path d="M0 27q3-11 12-11t12 10z" fill="#3fb0d6" stroke="#fff" /></I></SideTab>
          </Side>
          <PanelBox>
            <PBar>
              <PBtn><Check /></PBtn>
              <PBtn><Cross /></PBtn>
              <PBtn><OkPlus /></PBtn>
              <PBtn $ml={160}><InfoI /></PBtn>
              <PBtn $w={17}><Collapse /></PBtn>
            </PBar>
            <Section>
              <SectionHead><Tri />基本入力</SectionHead>
              <SectionBody>
                {[["エンティティ1", "F3@TRY_2", "#00f6ff", 1], ["エンティティ2", "F3@TRY_1", "#ff9cf0", 0]].map(([l, v, c, d]) => (
                  <EntRow key={l}>
                    <EntLabel>{kt(l)}</EntLabel>
                    <EntInput>{v}</EntInput>
                    <Swatch $c={c} $dark={d} />
                    <EntIcon $ml={6}><Picker /></EntIcon>
                    <EntIcon $ml={10}><Down /></EntIcon>
                  </EntRow>
                ))}
              </SectionBody>
            </Section>
            <Section>
              <SectionHead><Tri />拘束</SectionHead>
              <SectionBody $pad="5px 0 0 10px">
                <TypeRow>
                  {["center", "tan", "conc", "par", "perp", "ang", "lock", "dist", "sym", "eq", "mate"].map((k, i) => (
                    <TypeBtn key={k} $on={i === 0} $off={i === 1 || i === 2}><I s={22} vb="0 0 24 24">{mini[k]}</I></TypeBtn>
                  ))}
                </TypeRow>
                <Row>
                  <RadioCell><Radio $on />値</RadioCell>
                  <RadioCell><Radio />範囲</RadioCell>
                </Row>
                {[["オフセット", 1], ["最小", 0], ["最大", 0]].map(([l, cb], i) => (
                  <Row key={l} $dim $mt={i ? 4 : 1}>
                    {cb ? <CheckBox $dim /> : null}
                    <FieldLabel $w={cb ? 116 : 139}>{kt(l)}</FieldLabel>
                    <Spin><SpinVal>0</SpinVal>mm<SpinArrows><Up /><Dn /></SpinArrows></Spin>
                    <RowEnd><Down on={false} /><GrayCaret /></RowEnd>
                  </Row>
                ))}
                <Row $mt={1}>
                  <RadioCell><Radio $on />同方向</RadioCell>
                  <RadioCell><Radio />対面</RadioCell>
                </Row>
                <Row $h={26}><CheckBox />既存拘束を表示</Row>
                <Row $h={26}><CheckBox />位置変更のみ</Row>
                <Row $h={26} $mb={1}><CheckBox $mr={5}><I s={12} vb="0 0 12 12"><path d="M1 6l4 4 6-9" stroke="#4c6a92" strokeWidth="2" fill="none" /></I></CheckBox>{kt("ミニバーをポップアップ")}</Row>
              </SectionBody>
            </Section>
            <Section>
              <SectionHead><Tri />設定</SectionHead>
              <SectionBody $pad="8px 0 5px 10px">
                <Row $h={33}><CheckBox $mr={5} />{kt("コンポーネント 1を透明にする")}</Row>
                <Row $h={33}><CheckBox /><FieldLabel $w={158}>{kt("関連のないコンポーネント")}</FieldLabel><SmallCombo $w={113}>{kt("ワイヤフレーム")}<GrayCaret /></SmallCombo></Row>
                <Row $h={33}><CheckBox />補助座標系を非表示</Row>
              </SectionBody>
            </Section>
          </PanelBox>
        </Left>

        <View>
          <Model />
          <ViewBar>
            <ViewItem $ml={0}>{vi.exit}</ViewItem>
            <ViewItem $ml={6}>{vi.tree}</ViewItem><ViewItem $w={10}><ArrowTri /></ViewItem>
            <ViewItem $ml={10}>{vi.brush}</ViewItem>
            <ViewItem>{vi.box}</ViewItem>
            <ViewItem $ml={6}>{vi.cube}</ViewItem><ViewItem $w={10} $ml={3}><ArrowTri /></ViewItem>
            <ViewItem $ml={9}>{vi.wire}</ViewItem><ViewItem $w={10}><ArrowTri /></ViewItem>
            <ViewItem $ml={9}>{vi.mesh}</ViewItem><ViewItem $w={10}><ArrowTri /></ViewItem>
            <ViewItem $ml={9}>{vi.zoom}</ViewItem><ViewItem $w={10}><ArrowTri /></ViewItem>
            <ViewItem $ml={9}>{vi.target}</ViewItem><ViewItem $w={10}><ArrowTri /></ViewItem>
            <ViewItem $ml={9}>{vi.page}</ViewItem>
            <ViewItem $ml={5}>{vi.dim}</ViewItem><ViewItem $w={10}><ArrowTri /></ViewItem>
            <ViewItem $ml={9}>{vi.screen}</ViewItem><ViewItem $w={10}><ArrowTri /></ViewItem>
            <ViewItem $ml={8}><ColorChip $c="#000" /></ViewItem>
            <ViewItem $ml={6}><ColorChip $c="#bfe4f3" $h={22} /></ViewItem>
            <ViewItem $ml={5}>{vi.layers}</ViewItem><ViewItem $w={10}><ArrowTri /></ViewItem>
            <LayerBox>
              <I w={10} h={18} vb="0 0 10 18"><path d="M5 1a4 4 0 0 1 2.5 7.2V13h-5V8.2A4 4 0 0 1 5 1z" fill="#f2f2f2" stroke="#bbb" /><path d="M3 15h4" stroke="#bbb" /></I>
              <I s={16} vb="0 0 16 16"><circle cx="8" cy="8" r="6.5" fill="#dcdcdc" stroke="#aaa" /></I>
              <LayerName>Layer0000</LayerName>
              <GrayCaret />
            </LayerBox>
          </ViewBar>
          <MiniBar>
            <MiniHead>
              <I w={19} h={24} vb="0 0 20 22"><path d="M1 2h18v11q-1 6-9 9q-8-3-9-9z" fill="#1583b5" /><path d="M4 4l9 14M13 3 7 16" stroke="#fff" strokeWidth="2.4" /></I>
              <MiniTitle>拘束付け</MiniTitle>
              <MiniTools>
                <I w={14} h={14} vb="0 0 14 14"><path d="M1 1h12v8H7l-2 4V9H1z" fill="#f4f4f4" stroke="#a8abaf" /></I>
                <I w={14} h={14} vb="0 0 14 14"><path d="M2 1l10 12M12 1 2 13" stroke="#9da1a6" strokeWidth="3.2" /></I>
              </MiniTools>
            </MiniHead>
            <MiniRow>
              {["center", "tan", "conc", "par", "perp", "ang"].map((k, i) => (
                <TypeBtn key={k} $w={30} $h={30} $on={i === 0} $off={i === 1 || i === 2}><I s={22} vb="0 0 24 24">{mini[k]}</I></TypeBtn>
              ))}
              <TypeBtn $w={30} $mr={8}><I s={22} vb="0 0 24 24">{mini.dist}</I></TypeBtn>
              <TypeBtn $w={30} $mr={2}><I s={22} vb="0 0 24 24">{mini.flip}</I></TypeBtn>
              <TypeBtn $w={30}><I s={22} vb="0 0 24 24">{mini.ok}</I></TypeBtn>
              <TypeBtn $w={30}><I s={22} vb="0 0 24 24">{mini.no}</I></TypeBtn>
            </MiniRow>
          </MiniBar>
          <Distance>132.265mm</Distance>
        </View>
      </Main>

      <Status>
        <StatusText>&lt;{kt("マウス")}中{kt("ボタン")}&gt;で終了.</StatusText>
        <StatusSep />
        <StatusBtn $w={27} $ml={11} $on><I s={20} vb="0 0 20 20"><rect x="1" y="1" width="18" height="18" fill="#fff" stroke="#5b86c8" strokeWidth="1.6" /><rect x="1" y="1" width="5" height="18" fill="#9db8e0" /><rect x="1" y="1" width="18" height="3" fill="#4a78c0" /><path d="M10 6h7" stroke="#555" strokeWidth="2" /><rect x="12" y="7" width="3" height="10" fill="#c8272c" /></I></StatusBtn>
        <StatusBtn $w={20} $ml={13}><I s={20} vb="0 0 20 20"><rect x="1" y="1" width="18" height="14" fill="#46bcd8" stroke="#8e949b" strokeWidth="1.5" /><rect x="6" y="15" width="8" height="3" fill="#555" /></I></StatusBtn>
        <StatusBtn $w={20} $ml={18}><I s={19} vb="0 0 20 20"><rect x="1" y="1" width="18" height="18" fill="#e9eefa" stroke="#6a8bc8" strokeWidth="1.6" /><rect x="1" y="1" width="18" height="4" fill="#4a78c0" /><path d="M4 8h12M4 11h12M4 14h10" stroke="#777" /></I></StatusBtn>
        <StatusInput />
      </Status>
    </Page>
  );
}
